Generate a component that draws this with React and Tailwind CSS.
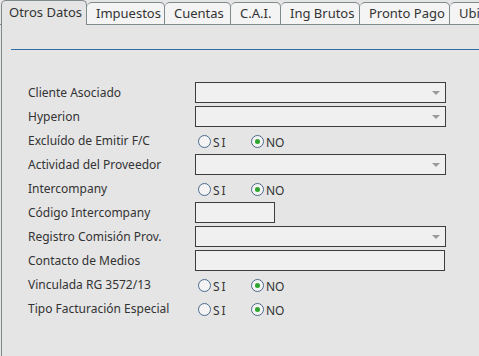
import React from 'react'

const tabs = [
  { name: 'Otros Datos', w: 86, active: true },
  { name: 'Impuestos', w: 78 },
  { name: 'Cuentas', w: 66 },
  { name: 'C.A.I.', w: 50 },
  { name: 'Ing Brutos', w: 79 },
  { name: 'Pronto Pago', w: 90 },
  { name: 'Ubicación', w: 80 },
]

const Select = () => (
  <div className="relative h-[21px] w-[251px] border border-[#3d3d3d] bg-[#f0f0f0]">
    <div className="absolute right-[5px] top-[8px] h-0 w-0 border-x-[4px] border-t-[4px] border-x-transparent border-t-[#9a9a9a]" />
  </div>
)

const Radio = ({ checked, label, spaced }) => (
  <div className="flex items-center pt-[1px]">
    <div className="flex h-[13px] w-[13px] items-center justify-center rounded-full border border-[#4a6a8c] bg-[#f4f4f4]">
      {checked && <div className="h-[5px] w-[5px] rounded-full bg-[#2fa52f]" />}
    </div>
    <span className={`ml-[2px] mt-[3px] text-[12px] leading-none text-[#333] ${spaced ? 'tracking-[2px]' : ''}`}>
      {label}
    </span>
  </div>
)

const SiNo = () => (
  <div className="flex items-center pl-[3px]">
    <div className="w-[53px]"><Radio label="SI" spaced /></div>
    <Radio checked label="NO" />
  </div>
)

const rows = [
  { label: 'Cliente Asociado', field: <Select /> },
  { label: 'Hyperion', field: <Select /> },
  { label: 'Excluído de Emitir F/C', field: <SiNo /> },
  { label: 'Actividad del Proveedor', field: <Select /> },
  { label: 'Intercompany', field: <SiNo /> },
  { label: 'Código Intercompany', field: <div className="h-[21px] w-[80px] border border-[#3d3d3d] bg-[#f0f0f0]" /> },
  { label: 'Registro Comisión Prov.', field: <Select /> },
  { label: 'Contacto de Medios', field: <div className="h-[21px] w-[250px] border border-[#3d3d3d] bg-[#f0f0f0]" /> },
  { label: 'Vinculada RG 3572/13', field: <SiNo /> },
  { label: 'Tipo Facturación Especial', field: <SiNo /> },
]

export default function App() {
  return (
    <div
      className="h-[356px] w-[479px] overflow-hidden bg-[#e5e5e5] text-[#333]"
      style={{ fontFamily: '"Noto Sans", "Open Sans", sans-serif' }}
    >
      {/* tab strip */}
      <div className="flex h-[25px] items-end overflow-hidden">
        <div className="w-[1px] shrink-0 self-stretch border-b border-[#7f8a8c]" />
        {tabs.map((t) =>
          t.active ? (
            <div
              key={t.name}
              className="flex h-[25px] shrink-0 items-center whitespace-nowrap rounded-t-[5px] border-x border-t border-[#7f8a8c] bg-[#e5e5e5] pl-[7px] text-[13px]"
              style={{ width: t.w }}
            >
              {t.name}
            </div>
          ) : (
            <div
              key={t.name}
              className="flex h-[23px] shrink-0 items-center whitespace-nowrap rounded-t-[5px] border-r border-t border-b border-[#7f8a8c] bg-[#f4f4f4] px-[9px] text-[13px]"
              style={{ width: t.w }}
            >
              {t.name}
            </div>
          )
        )}
      </div>

      {/* panel */}
      <div className="ml-[1px] h-[331px] border-l border-[#7f8a8c] pt-[24px]">
        <div className="ml-[9px] h-[1px] bg-[#2f6ea5]" />
        <div className="flex flex-col gap-[3px] pl-[26px] pt-[32px]">
          {rows.map((r) => (
            <div key={r.label} className="flex h-[21px] items-center">
              <div className="w-[167px] pt-[1px] text-[12px]">{r.label}</div>
              {r.field}
            </div>
          ))}
        </div>
      </div>
    </div>
  )
}
